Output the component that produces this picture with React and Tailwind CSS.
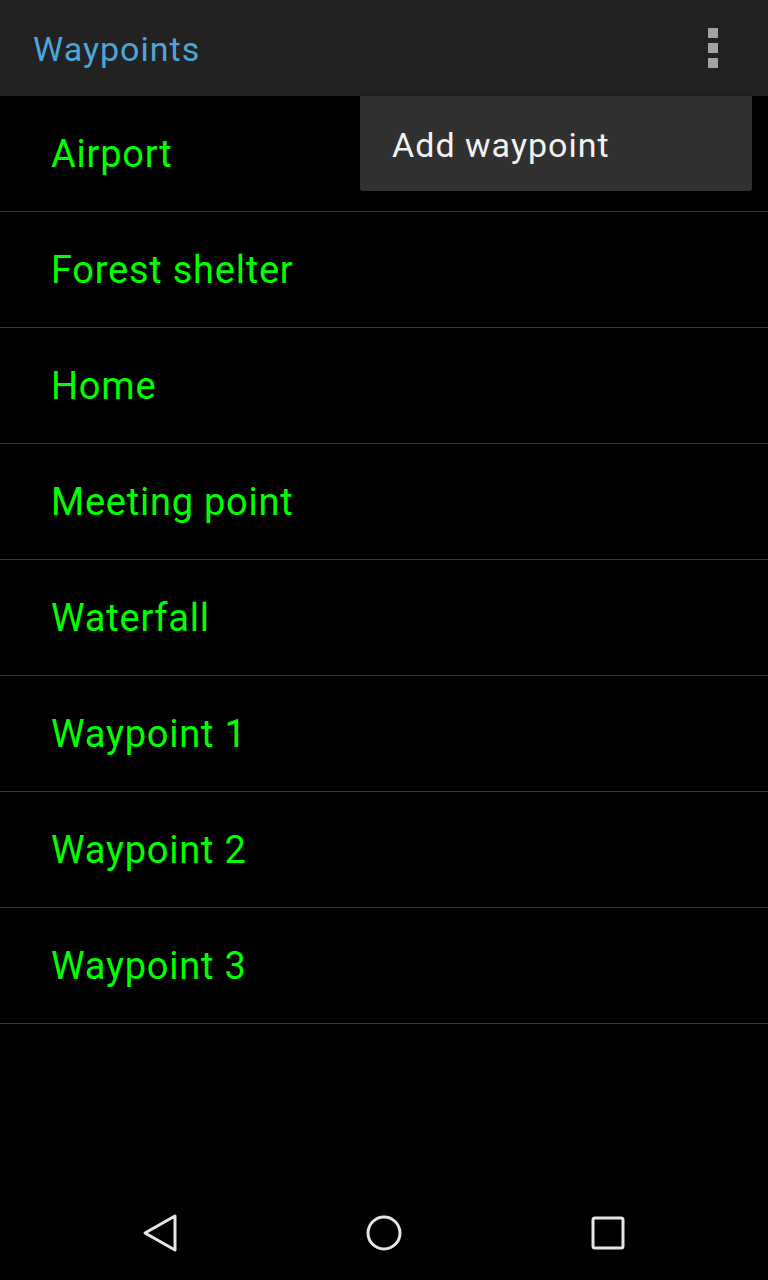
import React from 'react';

const waypoints = [
  'Airport',
  'Forest shelter',
  'Home',
  'Meeting point',
  'Waterfall',
  'Waypoint 1',
  'Waypoint 2',
  'Waypoint 3',
];

function NavBar() {
  return (
    <div className="h-[96px] flex items-center justify-between bg-black px-[140px] pt-[1px]">
      <svg width="40" height="40" viewBox="0 0 40 40">
        <path d="M35 3 L5 20 L35 37 Z" fill="none" stroke="#e6e6e6" strokeWidth="3" strokeLinejoin="round" />
      </svg>
      <svg width="40" height="40" viewBox="0 0 40 40">
        <circle cx="20" cy="20" r="16" fill="none" stroke="#e6e6e6" strokeWidth="3" />
      </svg>
      <svg width="40" height="40" viewBox="0 0 40 40">
        <rect x="5" y="5" width="30" height="30" rx="2" fill="none" stroke="#e6e6e6" strokeWidth="3" />
      </svg>
    </div>
  );
}

export default function App() {
  return (
    <div className="w-[768px] h-[1280px] bg-black flex flex-col relative overflow-hidden" style={{ fontFamily: 'Roboto, sans-serif' }}>
      {/* Action bar */}
      <header className="h-[96px] bg-[#222222] flex items-center justify-between pl-[33px] pr-[50px] shrink-0">
        <h1 className="text-[34px] tracking-[0.03em] text-[#4da6d9] leading-none pt-[2px]">Waypoints</h1>
        <div className="flex flex-col gap-[5px]">
          <span className="block w-[10px] h-[10px] bg-[#a3a3a3]" />
          <span className="block w-[10px] h-[10px] bg-[#a3a3a3]" />
          <span className="block w-[10px] h-[10px] bg-[#a3a3a3]" />
        </div>
      </header>

      {/* List */}
      <ul className="flex-1">
        {waypoints.map((name) => (
          <li key={name} className="h-[116px] flex items-center pl-[51px] pt-[2px] border-b border-[#363636] text-[38px] tracking-[0.02em] text-[#00ff00]">
            {name}
          </li>
        ))}
      </ul>

      <NavBar />

      {/* Overflow menu */}
      <div className="absolute top-[96px] left-[360px] w-[392px] h-[95px] bg-[#313131] rounded-b-[3px] shadow-[0_2px_6px_rgba(0,0,0,0.6)] flex items-center pl-[32px] pt-[3px]">
        <span className="text-[34px] tracking-[0.03em] text-[#f2f2f2]">Add waypoint</span>
      </div>
    </div>
  );
}
